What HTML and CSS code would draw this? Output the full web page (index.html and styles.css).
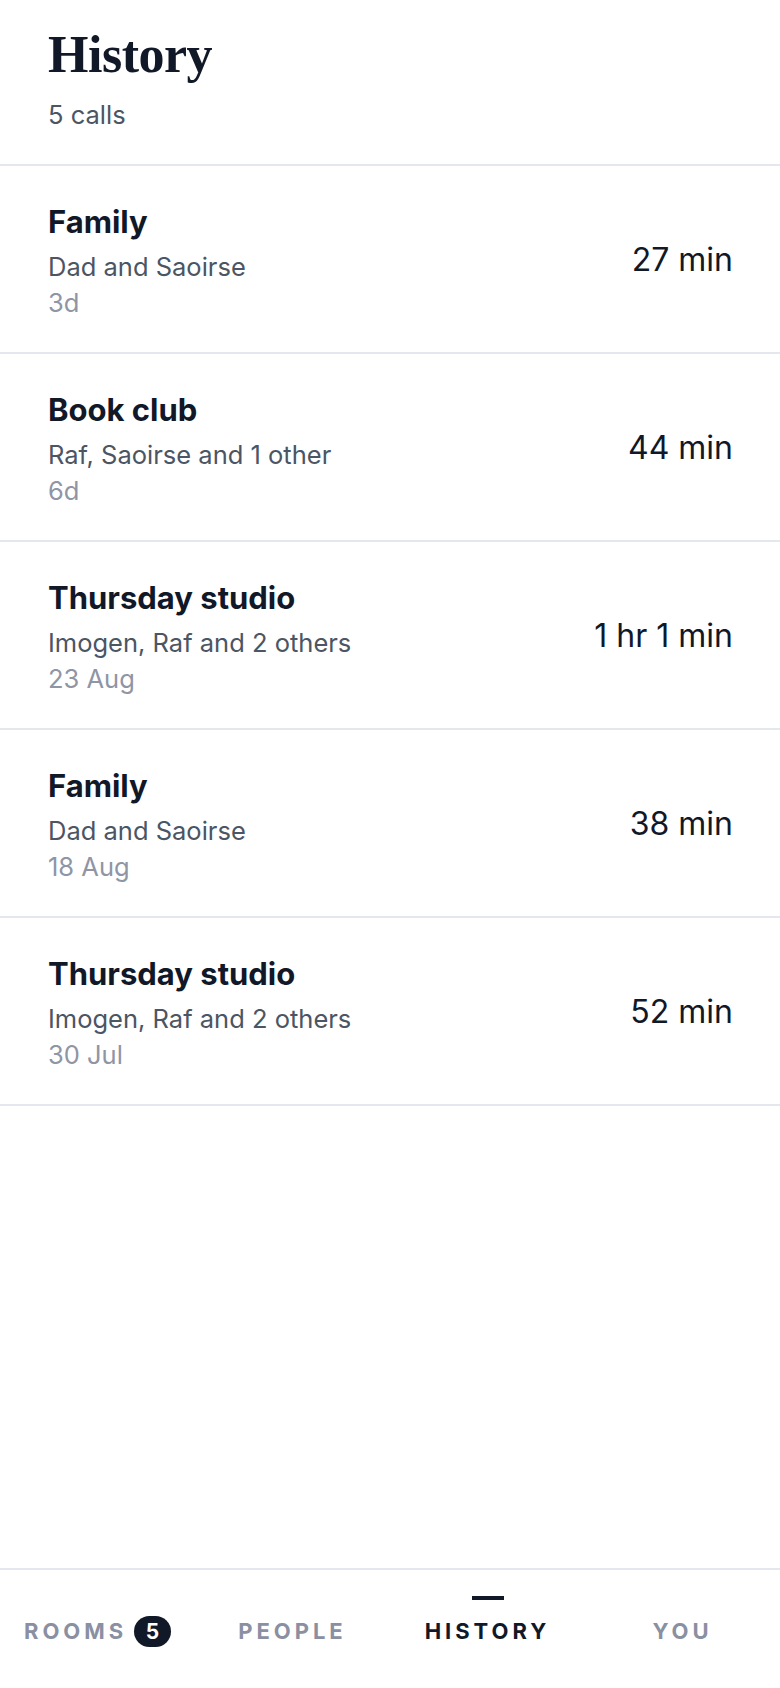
FILE: index.html
```html
<!DOCTYPE html>
<html lang="en">
  <head>
    <meta charset="UTF-8" />
    <meta name="viewport" content="width=device-width, initial-scale=1.0" />
    <title>History</title>
    <link rel="stylesheet" href="styles.css">
  </head>
  <body>
    <header class="top">
      <h1>History</h1>
      <p class="count">5 calls</p>
    </header>
    <main class="list">
      <div class="call">
        <div class="info">
          <div class="room">Family</div>
          <div class="people">Dad and Saoirse</div>
          <div class="when">3d</div>
        </div>
        <div class="length">27 min</div>
      </div>
      <div class="call">
        <div class="info">
          <div class="room">Book club</div>
          <div class="people">Raf, Saoirse and 1 other</div>
          <div class="when">6d</div>
        </div>
        <div class="length">44 min</div>
      </div>
      <div class="call">
        <div class="info">
          <div class="room">Thursday studio</div>
          <div class="people">Imogen, Raf and 2 others</div>
          <div class="when">23 Aug</div>
        </div>
        <div class="length">1 hr 1 min</div>
      </div>
      <div class="call">
        <div class="info">
          <div class="room">Family</div>
          <div class="people">Dad and Saoirse</div>
          <div class="when">18 Aug</div>
        </div>
        <div class="length">38 min</div>
      </div>
      <div class="call">
        <div class="info">
          <div class="room">Thursday studio</div>
          <div class="people">Imogen, Raf and 2 others</div>
          <div class="when">30 Jul</div>
        </div>
        <div class="length">52 min</div>
      </div>
    </main>
    <nav class="tabs">
      <a class="tab">
        <span class="bar"></span>
        <span class="label">Rooms <span class="badge">5</span></span>
      </a>
      <a class="tab">
        <span class="bar"></span>
        <span class="label">People</span>
      </a>
      <a class="tab active">
        <span class="bar"></span>
        <span class="label">History</span>
      </a>
      <a class="tab">
        <span class="bar"></span>
        <span class="label">You</span>
      </a>
    </nav>
  </body>
</html>
```

FILE: styles.css
```css
body {
  font-family: Inter, "Noto Sans", sans-serif;
  background-color: #fff;
  color: #111827;
  margin: 0;
  padding: 0;
  min-height: 100vh;
  display: flex;
  flex-direction: column;
}
.top {
  padding: 29px 48px 33px;
  border-bottom: 2px solid #e4e7ee;
}
.top h1 {
  font-family: "Liberation Serif", "Times New Roman", serif;
  font-size: 52px;
  line-height: 52px;
  font-weight: 700;
  letter-spacing: -0.5px;
  margin: 0;
}
.count {
  font-size: 25.5px;
  line-height: 32px;
  color: #4b5563;
  margin: 18px 0 0;
}
.list {
  flex: 1;
}
.call {
  display: flex;
  justify-content: space-between;
  align-items: center;
  padding: 38px 47px 32px 48px;
  border-bottom: 2px solid #e4e7ee;
}
.room {
  font-size: 31px;
  line-height: 36px;
  font-weight: 700;
}
.people {
  font-size: 25.5px;
  line-height: 34px;
  color: #4b5563;
  margin-top: 10px;
}
.when {
  font-size: 25.5px;
  line-height: 34px;
  color: #8f95a5;
  margin-top: 2px;
}
.length {
  font-size: 32px;
  font-weight: 400;
  margin-bottom: 6px;
}
.tabs {
  display: grid;
  grid-template-columns: repeat(4, 1fr);
  height: 118px;
  border-top: 2px solid #e4e7ee;
}
.tab {
  display: flex;
  flex-direction: column;
  align-items: center;
  padding-top: 26px;
  color: #8a90a2;
}
.bar {
  width: 32px;
  height: 4px;
  background: #111827;
  visibility: hidden;
}
.tab.active {
  color: #111827;
}
.tab.active .bar {
  visibility: visible;
}
.label {
  display: flex;
  align-items: center;
  margin-top: 18px;
  height: 26px;
  font-size: 22px;
  font-weight: 700;
  letter-spacing: 0.18em;
  text-transform: uppercase;
}
.badge {
  display: inline-flex;
  align-items: center;
  justify-content: center;
  width: 37px;
  height: 31px;
  border-radius: 16px;
  background: #111827;
  color: #fff;
  font-size: 21px;
  letter-spacing: 0;
  margin-left: 7px;
}
```
